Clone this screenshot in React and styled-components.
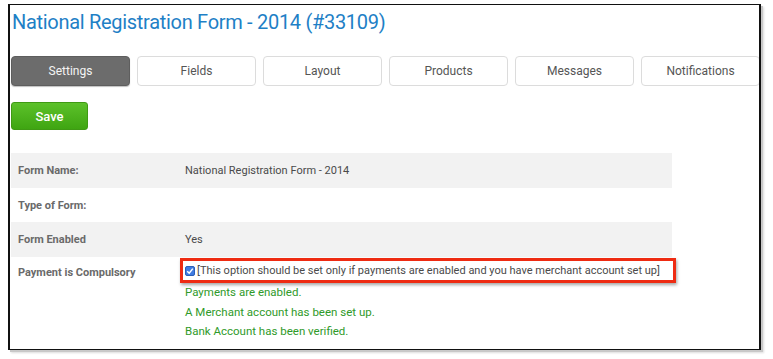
import React from "react";
import styled, { createGlobalStyle } from "styled-components";

const GlobalStyle = createGlobalStyle`
  html, body {
    margin: 0;
    padding: 0;
    background: #ffffff;
  }
  body {
    font-family: "Roboto", "Liberation Sans", sans-serif;
  }
`;

const Page = styled.div`
  width: 773px;
  height: 359px;
  padding: 4px 0 0 8px;
  box-sizing: border-box;
  overflow: hidden;
`;

const Frame = styled.div`
  width: 753px;
  height: 346px;
  box-sizing: border-box;
  border: 1px solid #111;
  border-left-width: 2px;
  border-right-width: 2px;
  box-shadow: 2px 2px 0 #c8c8c8, 3px 3px 2px #dcdcdc;
  padding: 0 0 0 1px;
  overflow: hidden;
`;

const Title = styled.h1`
  margin: 3px 0 0 1px;
  font-size: 20px;
  line-height: 28px;
  font-weight: 400;
  color: #1e80c6;
  letter-spacing: -0.3px;
`;

const Tabs = styled.div`
  display: flex;
  gap: 7px;
  margin-top: 20px;
`;

const Tab = styled.div`
  flex: 0 0 119px;
  height: 30px;
  box-sizing: border-box;
  display: flex;
  align-items: center;
  justify-content: center;
  border-radius: 4px;
  font-size: 12px;
  color: ${(p) => (p.$active ? "#f4f4f4" : "#555")};
  background: ${(p) => (p.$active ? "#6c6c6c" : "#fff")};
  border: 1px solid ${(p) => (p.$active ? "#5e5e5e" : "#dcdcdc")};
  box-shadow: ${(p) => (p.$active ? "0 1px 1px rgba(0,0,0,0.25)" : "none")};
`;

const SaveButton = styled.button`
  display: block;
  margin-top: 16px;
  width: 77px;
  height: 28px;
  border: 1px solid #3f9a14;
  border-radius: 3px;
  background: linear-gradient(#5cc12a, #3fa512);
  color: #fff;
  font-family: inherit;
  font-size: 13px;
  font-weight: 500;
  padding: 0;
`;

const Table = styled.div`
  width: 661px;
  margin-top: 23px;
  font-size: 11px;
`;

const Row = styled.div`
  display: grid;
  grid-template-columns: 169px 1fr;
  align-items: ${(p) => (p.$top ? "start" : "center")};
  min-height: ${(p) => p.$h}px;
  background: ${(p) => (p.$shade ? "#f2f2f2" : "transparent")};
`;

const Label = styled.div`
  padding-left: 7px;
  font-weight: 700;
  color: #6a6a6a;
  padding-top: ${(p) => (p.$top ? "9px" : "0")};
`;

const Value = styled.div`
  padding-left: 5px;
  color: #4a4a4a;
`;

const PaymentCell = styled.div`
  display: flex;
  flex-direction: column;
  align-items: flex-start;
  padding-top: 1px;
`;

const Highlight = styled.div`
  display: flex;
  align-items: center;
  flex-shrink: 0;
  gap: 2px;
  width: 496px;
  height: 25px;
  box-sizing: border-box;
  border: 3px solid #ee2b12;
  box-shadow: 1px 2px 3px rgba(0, 0, 0, 0.35);
  padding: 0 0 0 2px;
  color: #4a4a4a;
  white-space: nowrap;
`;

const Note = styled.div`
  padding-left: 5px;
  color: #2f9a2a;
  font-size: 11.5px;
  line-height: 19.5px;
`;

const Check = () => (
  <svg width="10" height="10" viewBox="0 0 10 10">
    <rect x="0.5" y="0.5" width="9" height="9" rx="1.5" fill="#3f7be0" stroke="#2b5fb8" />
    <path d="M2.2 5.2 L4.2 7.2 L7.8 2.6" fill="none" stroke="#fff" strokeWidth="1.5" />
  </svg>
);

const tabs = ["Settings", "Fields", "Layout", "Products", "Messages", "Notifications"];

export default function App() {
  return (
    <>
      <GlobalStyle />
      <Page>
        <Frame>
          <Title>National Registration Form - 2014 (#33109)</Title>
          <Tabs>
            {tabs.map((t, i) => (
              <Tab key={t} $active={i === 0}>
                {t}
              </Tab>
            ))}
          </Tabs>
          <SaveButton>Save</SaveButton>
          <Table>
            <Row $h={35} $shade>
              <Label>Form Name:</Label>
              <Value>National Registration Form - 2014</Value>
            </Row>
            <Row $h={34}>
              <Label>Type of Form:</Label>
              <Value />
            </Row>
            <Row $h={35} $shade>
              <Label>Form Enabled</Label>
              <Value>Yes</Value>
            </Row>
            <Row $h={90} $top>
              <Label $top>Payment is Compulsory</Label>
              <PaymentCell>
                <Highlight>
                  <Check />
                  <span>
                    [This option should be set only if payments are enabled and you have merchant account set up]
                  </span>
                </Highlight>
                <Note>Payments are enabled.</Note>
                <Note>A Merchant account has been set up.</Note>
                <Note>Bank Account has been verified.</Note>
              </PaymentCell>
            </Row>
          </Table>
        </Frame>
      </Page>
    </>
  );
}
